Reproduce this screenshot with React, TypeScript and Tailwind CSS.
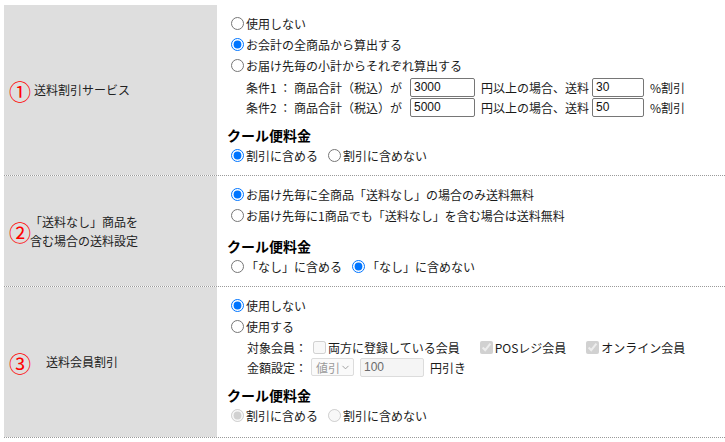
import React from "react";
import { ChevronDown } from "lucide-react";

// radio with label, native input so it looks like the browser default
const Radio = ({
  label,
  checked = false,
  disabled = false,
  className = "",
}: {
  label: string;
  checked?: boolean;
  disabled?: boolean;
  className?: string;
}) => (
  <label className={`flex items-center h-[21px] ${className}`}>
    <input
      type="radio"
      checked={checked}
      disabled={disabled}
      readOnly
      className="m-0 ml-[4px] mr-[2px] w-[13px] h-[13px] accent-[#0075ff]"
    />
    <span>{label}</span>
  </label>
);

const Check = ({ label, checked = false }: { label: string; checked?: boolean }) => (
  <label className="flex items-center">
    <input
      type="checkbox"
      checked={checked}
      disabled
      readOnly
      className="m-0 mr-[2px] w-[13px] h-[13px]"
    />
    <span>{label}</span>
  </label>
);

const NumInput = ({ value, w = "w-[65px]" }: { value: string; w?: string }) => (
  <input
    type="text"
    value={value}
    readOnly
    className={`${w} h-[19px] border border-[#767676] rounded-[2px] px-[3px] text-[12px] text-[#111] font-['Liberation_Sans',sans-serif] outline-none`}
  />
);

const CoolHeader = ({ className = "" }: { className?: string }) => (
  <div className={`h-[20px] leading-[20px] text-[14px] font-bold text-black ${className}`}>
    クール便料金
  </div>
);

const Mark = ({ n }: { n: string }) => (
  <span className="text-[22px] leading-none text-[#ff0000]">{n}</span>
);

export default function App() {
  return (
    <div className="w-[725px] h-[442px] bg-white pt-[5px] pl-[4px] text-[12px] text-[#1a1a1a] font-['Noto_Sans_CJK_JP','Noto_Sans',sans-serif]">
      {/* row 1 */}
      <div className="flex h-[171px] border-b border-dotted border-[#9a9a9a]">
        <div className="w-[213px] bg-[#dedede] flex items-center pl-[5px]">
          <Mark n="①" />
          <span className="ml-[3px] text-[#222]">送料割引サービス</span>
        </div>
        <div className="flex-1 pl-[10px] pt-[8px] leading-[21px]">
          <Radio label="使用しない" />
          <Radio label="お会計の全商品から算出する" checked />
          <Radio label="お届け先毎の小計からそれぞれ算出する" />
          <div className="flex items-center h-[20px] pl-[19px] mt-[1px]">
            <span className="w-[164px]">条件1 ： 商品合計（税込）が</span>
            <NumInput value="3000" />
            <span className="ml-[6px] w-[111px]">円以上の場合、送料</span>
            <NumInput value="30" w="w-[52px]" />
            <span className="ml-[6px]">%割引</span>
          </div>
          <div className="flex items-center h-[20px] pl-[19px]">
            <span className="w-[164px]">条件2 ： 商品合計（税込）が</span>
            <NumInput value="5000" />
            <span className="ml-[6px] w-[111px]">円以上の場合、送料</span>
            <NumInput value="50" w="w-[52px]" />
            <span className="ml-[6px]">%割引</span>
          </div>
          <CoolHeader className="mt-[8px]" />
          <div className="flex gap-[6px]">
            <Radio label="割引に含める" checked />
            <Radio label="割引に含めない" />
          </div>
        </div>
      </div>

      {/* row 2 */}
      <div className="flex h-[111px] border-b border-dotted border-[#9a9a9a]">
        <div className="w-[213px] bg-[#dedede] flex items-center pl-[5px]">
          <Mark n="②" />
          <div className="text-center leading-[19px] text-[#222] -ml-[1px]">
            <div>「送料なし」商品を</div>
            <div>含む場合の送料設定</div>
          </div>
        </div>
        <div className="flex-1 pl-[10px] pt-[8px] leading-[21px]">
          <Radio label="お届け先毎に全商品「送料なし」の場合のみ送料無料" checked />
          <Radio label="お届け先毎に1商品でも「送料なし」を含む場合は送料無料" />
          <CoolHeader className="mt-[10px]" />
          <div className="flex gap-[6px]">
            <Radio label="「なし」に含める" />
            <Radio label="「なし」に含めない" checked />
          </div>
        </div>
      </div>

      {/* row 3 */}
      <div className="flex h-[151px] border-b border-dotted border-[#9a9a9a]">
        <div className="w-[213px] bg-[#dedede] flex items-center pl-[5px]">
          <Mark n="③" />
          <span className="ml-[15px] text-[#222]">送料会員割引</span>
        </div>
        <div className="flex-1 pl-[10px] pt-[8px] leading-[21px]">
          <Radio label="使用しない" checked />
          <Radio label="使用する" />
          <div className="flex items-center h-[20px] pl-[20px]">
            <span className="w-[66px]">対象会員：</span>
            <div className="flex items-center gap-[20px]">
              <Check label="両方に登録している会員" />
              <Check label="POSレジ会員" checked />
              <Check label="オンライン会員" checked />
            </div>
          </div>
          <div className="flex items-center h-[20px] pl-[20px]">
            <span className="w-[64px]">金額設定：</span>
            <div className="flex items-center justify-between w-[43px] h-[18px] border border-[#dcdcdc] bg-[#fafafa] rounded-[2px] pl-[4px] pr-[2px] text-[#9a9a9a]">
              <span>値引</span>
              <ChevronDown className="w-[11px] h-[11px]" strokeWidth={2} />
            </div>
            <input
              type="text"
              value="100"
              disabled
              readOnly
              className="ml-[6px] w-[64px] h-[19px] border border-[#dcdcdc] bg-[#f5f5f5] rounded-[2px] px-[3px] text-[12px] text-[#6b6b6b] font-['Liberation_Sans',sans-serif]"
            />
            <span className="ml-[6px]">円引き</span>
          </div>
          <CoolHeader className="mt-[8px]" />
          <div className="flex gap-[6px]">
            <Radio label="割引に含める" checked disabled />
            <Radio label="割引に含めない" disabled />
          </div>
        </div>
      </div>
    </div>
  );
}
